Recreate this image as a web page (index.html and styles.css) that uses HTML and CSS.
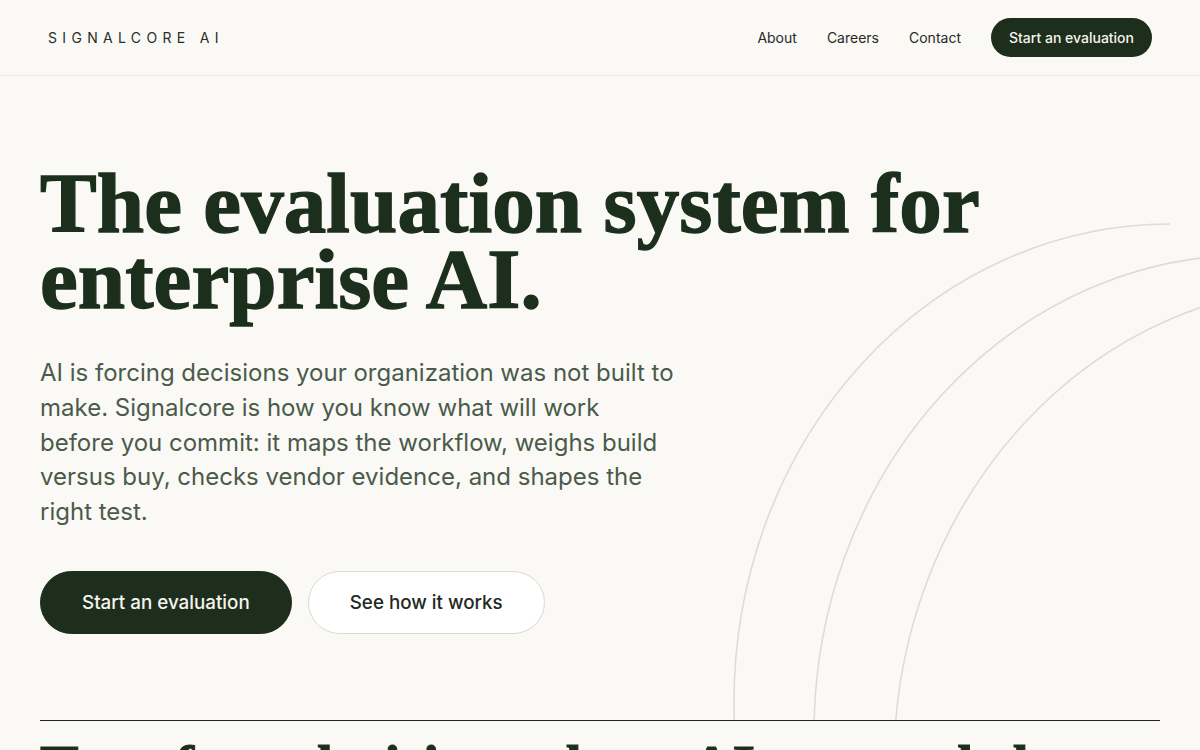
FILE: index.html
```html
<!DOCTYPE html>
<html lang="en">
<head>
<meta charset="utf-8">
<title>Signalcore AI</title>
<link rel="stylesheet" href="styles.css">
</head>
<body>
<header class="site-header">
  <div class="logo">SIGNALCORE AI</div>
  <nav class="nav">
    <a class="nav-link" href="#">About</a>
    <a class="nav-link" href="#">Careers</a>
    <a class="nav-link" href="#">Contact</a>
    <a class="nav-cta" href="#">Start an evaluation</a>
  </nav>
</header>
<main>
  <section class="hero">
    <svg class="hero-arcs" width="1200" height="644" viewBox="0 0 1200 644" aria-hidden="true">
      <path d="M 1170 1104 A 436 478 0 0 1 734 626 A 436 478 0 0 1 1170 148" />
      <path d="M 1250 1135 A 436 478 0 0 1 814 657 A 436 478 0 0 1 1250 179" />
      <path d="M 1330 1166 A 436 478 0 0 1 894 688 A 436 478 0 0 1 1330 210" />
    </svg>
    <div class="hero-content">
      <h1 class="hero-title">The evaluation system for enterprise AI.</h1>
      <p class="hero-lede">AI is forcing decisions your organization was not built to make. Signalcore is how you know what will work before you commit: it maps the workflow, weighs build versus buy, checks vendor evidence, and shapes the right test.</p>
      <div class="hero-actions">
        <a class="btn btn-primary" href="#">Start an evaluation</a>
        <a class="btn btn-secondary" href="#">See how it works</a>
      </div>
    </div>
  </section>
  <section class="next">
    <h2 class="next-title">Too often, decisions about AI are made by default.</h2>
  </section>
</main>
</body>
</html>
```
FILE: styles.css
```css
* { box-sizing: border-box; }
html, body { margin: 0; padding: 0; }
body {
  background: #faf9f6;
  color: #1d2e1d;
  font-family: Inter, "Noto Sans", sans-serif;
  overflow: hidden;
}
a { text-decoration: none; color: inherit; }

.site-header {
  height: 76px;
  display: flex;
  align-items: center;
  justify-content: space-between;
  padding: 0 48px;
  border-bottom: 1px solid #ebe8e1;
}
.logo {
  font-size: 14px;
  letter-spacing: 0.38em;
  color: #2b2d2a;
  font-weight: 400;
}
.nav {
  display: flex;
  align-items: center;
}
.nav-link {
  font-size: 14px;
  color: #262b25;
  margin-right: 30px;
}
.nav-cta {
  font-size: 14px;
  font-weight: 500;
  color: #f5f4ee;
  background: #1e2e1c;
  border-radius: 999px;
  padding: 10px 18px;
  line-height: 19px;
}

.hero {
  position: relative;
  overflow: hidden;
  padding: 89px 40px 86px;
}
.hero-arcs {
  position: absolute;
  top: 0;
  left: 0;
  fill: none;
  stroke: #dfdcd5;
  stroke-width: 1.6;
}
.hero-content {
  position: relative;
}
.hero-title {
  margin: 0;
  max-width: 980px;
  font-family: "Liberation Serif", "Times New Roman", serif;
  font-weight: 700;
  font-size: 85px;
  line-height: 76px;
  color: #1c2f1d;
  -webkit-text-stroke: 1.4px #1c2f1d;
  letter-spacing: 0.1px;
}
.hero-lede {
  margin: 39px 0 0;
  max-width: 640px;
  font-size: 24px;
  line-height: 34.8px;
  color: #4b5b4a;
}
.hero-actions {
  margin-top: 41px;
  display: flex;
  gap: 16px;
}
.btn {
  display: inline-block;
  border-radius: 999px;
  font-size: 18.8px;
  font-weight: 500;
  line-height: 23px;
  padding: 19px 41px;
  border: 1px solid transparent;
}
.btn-primary {
  background: #1e2e1c;
  border-color: #1e2e1c;
  color: #f5f4ee;
}
.btn-secondary {
  background: #ffffff;
  border-color: #d9d8d2;
  color: #222822;
}

.next {
  margin: 0 40px;
  border-top: 1px solid #1f2a1f;
  padding-top: 13px;
}
.next-title {
  margin: 0;
  font-family: "Liberation Serif", "Times New Roman", serif;
  font-weight: 700;
  font-size: 58px;
  line-height: 64px;
  color: #1c2f1d;
  -webkit-text-stroke: 1px #1c2f1d;
}
```
